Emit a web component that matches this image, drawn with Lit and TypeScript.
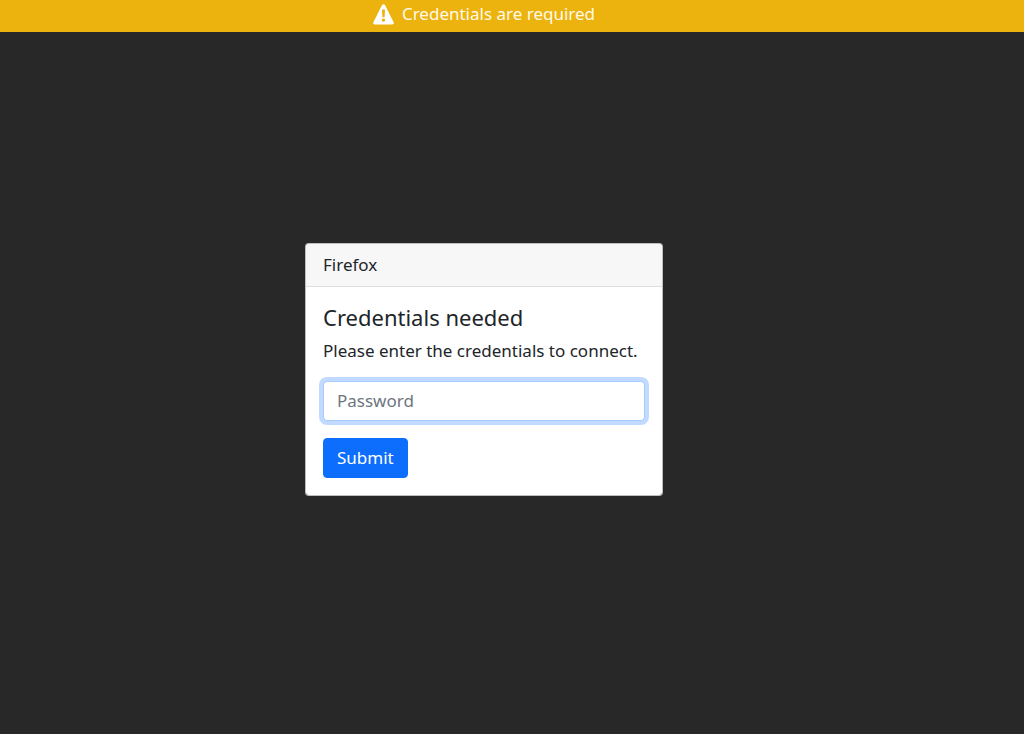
import { LitElement, html, css } from "lit";
import { customElement } from "lit/decorators.js";

@customElement("status-banner")
export class StatusBanner extends LitElement {
  static styles = css`
    :host {
      display: block;
      background: #ecb20e;
      color: #fffbe9;
      padding: 0 56px 4px 0;
    }
    .message {
      display: flex;
      align-items: center;
      justify-content: center;
      gap: 8px;
      line-height: 28px;
    }
    .icon {
      width: 21px;
      height: 21px;
      fill: #fff;
    }
  `;

  render() {
    return html`
      <div class="message" role="status">
        <svg class="icon" viewBox="0 0 21 21" aria-hidden="true">
          <path
            fill-rule="evenodd"
            d="M9 1.1a1.7 1.7 0 0 1 3 0l8.6 17.1a1.6 1.6 0 0 1-1.4 2.3H1.8a1.6 1.6 0 0 1-1.4-2.3zM9 6.2l.4 6.6q0 .5.5.5h1.2q.5 0 .5-.5l.4-6.6q0-.6-.6-.6H9.6q-.6 0-.6.6zM10.5 14.4a1.7 1.7 0 1 0 0 3.4 1.7 1.7 0 0 0 0-3.4z"
          />
        </svg>
        <span><slot></slot></span>
      </div>
    `;
  }
}

@customElement("credentials-card")
export class CredentialsCard extends LitElement {
  static styles = css`
    :host {
      display: block;
      box-sizing: border-box;
      width: 358px;
      max-width: 100%;
    }
    .card {
      background: #fff;
      background-clip: padding-box;
      border: 1px solid rgba(255, 255, 255, 0.7);
      border-radius: 4px;
      overflow: hidden;
    }
    .header {
      padding: 8px 17px;
      background: #f7f7f7;
      border-bottom: 1px solid #dfdfdf;
    }
    .body {
      padding: 17px;
    }
    .title {
      margin: 0 0 8px;
      font-size: 22px;
      font-weight: 400;
      line-height: 26px;
    }
    .text {
      margin: 0 0 17px;
    }
    .form {
      display: flex;
      flex-direction: column;
      align-items: flex-start;
      gap: 17px;
    }
    .field,
    .submit {
      box-sizing: border-box;
      height: 40px;
      margin: 0;
      padding: 0 13px;
      border-radius: 4px;
      font: inherit;
    }
    .field {
      width: 100%;
      border: 1px solid #a5cbff;
      background: #fff;
      color: #212529;
      outline: 0;
      box-shadow: 0 0 0 4px #c2daff;
    }
    .field::placeholder {
      color: #6c757d;
      opacity: 1;
    }
    .submit {
      border: 1px solid #0d6efd;
      background: #0d6efd;
      color: #fff;
      cursor: pointer;
    }
  `;

  private onSubmit(event: Event) {
    event.preventDefault();
  }

  render() {
    return html`
      <section class="card">
        <div class="header">Firefox</div>
        <div class="body">
          <h1 class="title">Credentials needed</h1>
          <p class="text">Please enter the credentials to connect.</p>
          <form class="form" @submit=${this.onSubmit}>
            <input
              id="password"
              class="field"
              type="password"
              placeholder="Password"
              aria-label="Password"
              autocomplete="off"
            />
            <button class="submit" type="submit">Submit</button>
          </form>
        </div>
      </section>
    `;
  }
}

@customElement("app-root")
export class AppRoot extends LitElement {
  static styles = css`
    :host {
      display: flex;
      flex-direction: column;
      min-height: 100vh;
      background: #282828;
      color: #212529;
      font-family: "Segoe UI", "Noto Sans", "Open Sans", sans-serif;
      font-size: 17px;
      line-height: 26px;
    }
    .main {
      flex: 1;
      display: flex;
      align-items: center;
      justify-content: center;
      padding: 0 56px 28px 0;
    }
  `;

  render() {
    return html`
      <status-banner>Credentials are required</status-banner>
      <main class="main">
        <credentials-card></credentials-card>
      </main>
    `;
  }
}
